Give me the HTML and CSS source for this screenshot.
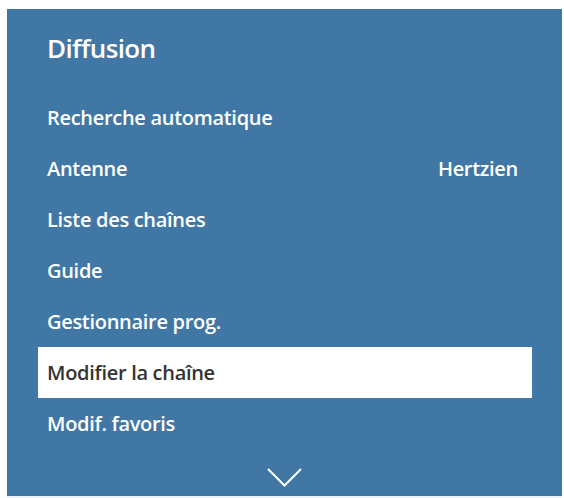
FILE: index.html
```html
<!DOCTYPE html>
<html lang="fr">
<head>
<meta charset="utf-8">
<title>Diffusion</title>
<link rel="stylesheet" href="styles.css">
</head>
<body>
<div class="panel">
  <h1 class="title">Diffusion</h1>
  <ul class="menu">
    <li class="item">Recherche automatique</li>
    <li class="item"><span>Antenne</span><span class="value">Hertzien</span></li>
    <li class="item">Liste des chaînes</li>
    <li class="item">Guide</li>
    <li class="item">Gestionnaire prog.</li>
    <li class="item selected">Modifier la chaîne</li>
    <li class="item">Modif. favoris</li>
  </ul>
  <div class="more">
    <svg width="35" height="19" viewBox="0 0 35 19"><path d="M1 1 L17.5 17.5 L34 1" fill="none" stroke="#ffffff" stroke-width="2"/></svg>
  </div>
</div>
</body>
</html>
```

FILE: styles.css
```css
html, body {
  margin: 0;
  padding: 0;
  background: #ffffff;
}
body {
  font-family: "Open Sans", "Liberation Sans", sans-serif;
}
.panel {
  margin: 9px 2px 0 7px;
  width: 555px;
  height: 487px;
  background: #4177a5;
  color: #ffffff;
  display: flex;
  flex-direction: column;
  border-bottom: 2px solid #eef2f6;
}
.title {
  margin: 0;
  padding: 23px 0 0 40px;
  height: 59px;
  box-sizing: border-box;
  font-size: 26px;
  font-weight: 600;
  line-height: 32px;
  letter-spacing: -0.6px;
}
.menu {
  list-style: none;
  margin: 0;
  padding: 24px 30px 0 31px;
  display: flex;
  flex-direction: column;
}
.item {
  height: 51px;
  display: flex;
  align-items: center;
  justify-content: space-between;
  padding: 0 14px 0 9px;
  font-size: 20px;
  font-weight: 600;
  letter-spacing: -0.3px;
}
.selected {
  background: #ffffff;
  color: #333333;
}
.more {
  display: flex;
  justify-content: center;
  padding-top: 19px;
}
```
